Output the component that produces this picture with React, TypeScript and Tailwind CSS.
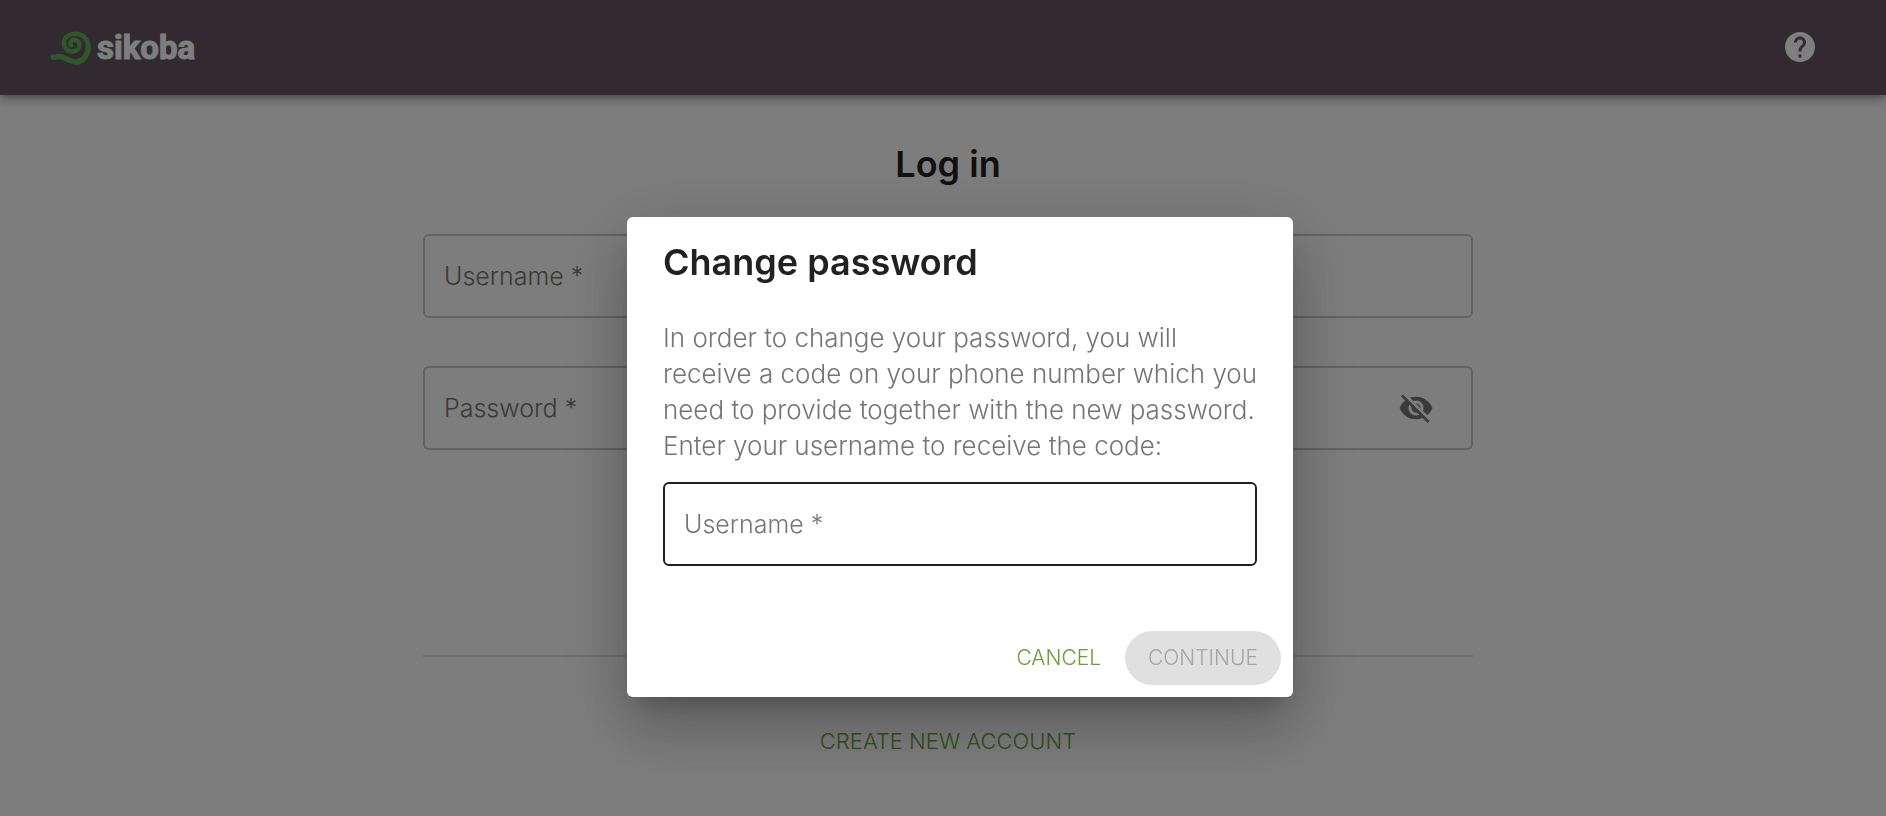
import type { ReactNode } from "react";
import { MdHelp, MdVisibilityOff } from "react-icons/md";

function Logo() {
  return (
    <a href="#" aria-label="sikoba" className="flex items-center gap-1.5 text-[#fdfdfd]">
      <svg viewBox="0 0 42 36" className="h-9 w-[42px] overflow-visible" fill="none" stroke="#5fae55" strokeLinecap="round" strokeLinejoin="round">
        <path d="M22 15.5C20.500 12 22.500 9.500 25.500 9.800C29 10 30.800 12.500 30.500 15.500C30 19.500 26.500 21.800 22.500 21.500C17.500 21 14.800 17 15 12.500C15.500 7 20.500 3.800 26.500 3.800C34 3.800 39 9 39.300 16.500" strokeWidth="4.400" />
        <path d="M39.200 16C39.300 24 35 30.500 28.500 32C22.500 32.500 17.500 28.500 12.500 26.800C9.500 26.300 7 27.300 4.300 27.300" strokeWidth="5.400" />
      </svg>
      <span className="font-['Roboto',sans-serif] text-[33px] leading-9 font-bold [-webkit-text-stroke:1px_#fdfdfd]">sikoba</span>
    </a>
  );
}

type FieldProps = { id: string; label: string; type?: string; focused?: boolean; children?: ReactNode };

function Field({ id, label, type = "text", focused = false, children }: FieldProps) {
  return (
    <div className={`relative flex h-21 items-center rounded-md border-2 ${focused ? "border-[#212121]" : "border-[#c4c4c4]"}`}>
      <label htmlFor={id} className="pointer-events-none absolute left-[19px] text-[25px] leading-9 text-[#757575]">
        {label} *
      </label>
      <input id={id} type={type} required className="h-full min-w-0 flex-1 bg-transparent px-[19px] text-[25px] outline-none" />
      {children}
    </div>
  );
}

export default function App() {
  return (
    <div className="min-h-screen overflow-x-hidden bg-[#fafafa] font-['Inter',sans-serif] font-light text-[#212121]">
      <header className="flex h-[95px] items-center justify-between bg-[#625662] pr-[68px] pl-[49px] shadow-[0_3px_6px_-1px_rgba(0,0,0,0.2),0_6px_8px_rgba(0,0,0,0.14),0_2px_15px_rgba(0,0,0,0.12)]">
        <Logo />
        <button type="button" aria-label="Help" className="pb-0.5 text-white">
          <MdHelp className="size-9" />
        </button>
      </header>

      <main className="pl-2.5">
        <form className="mx-auto flex max-w-[1050px] flex-col pt-[47px]">
          <h1 className="text-center text-[36px] leading-11 font-semibold">Log in</h1>
          <div className="mt-12 flex flex-col gap-12">
            <Field id="login-username" label="Username" />
            <Field id="login-password" label="Password" type="password">
              <button type="button" aria-label="Show password" className="mr-[37px] text-[#757575]">
                <MdVisibilityOff className="size-9" />
              </button>
            </Field>
          </div>
          <hr className="mt-[205px] border-t-2 border-[#dadada]" />
          <button type="button" className="mt-[57px] self-center text-[22px] leading-[54px] text-[#689f38]">
            CREATE NEW ACCOUNT
          </button>
        </form>
      </main>

      <div className="fixed inset-0 flex items-center justify-center bg-black/50 pt-[98px] pl-[34px]">
        <section
          role="dialog"
          aria-modal="true"
          aria-labelledby="dialog-title"
          className="w-[666px] rounded-md bg-white shadow-[0_16px_22px_-10px_rgba(0,0,0,0.2),0_36px_57px_4px_rgba(0,0,0,0.14),0_14px_69px_12px_rgba(0,0,0,0.12)]"
        >
          <h2 id="dialog-title" className="px-9 pt-[23px] text-[36px] leading-11 font-semibold">
            Change password
          </h2>
          <div className="px-9 pt-9">
            <p className="mb-[18px] text-[26px] leading-9 whitespace-nowrap text-[#757575]">
              In order to change your password, you will
              <br />
              receive a code on your phone number which you
              <br />
              need to provide together with the new password.
              <br />
              Enter your username to receive the code:
            </p>
            <Field id="reset-username" label="Username" focused />
          </div>
          <div className="flex justify-end gap-3 px-3 pt-[65px] pb-3 text-[21px] leading-[54px]">
            <button type="button" className="px-3 text-[#689f38]">
              CANCEL
            </button>
            <button type="button" disabled className="rounded-full bg-[#e0e0e0] px-[23px] text-[#a6a6a6]">
              CONTINUE
            </button>
          </div>
        </section>
      </div>
    </div>
  );
}
